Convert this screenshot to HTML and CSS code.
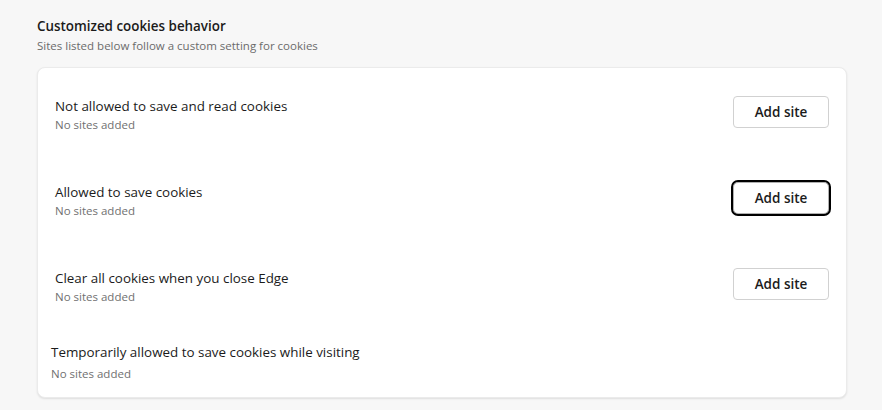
FILE: index.html
```html
<!DOCTYPE html>
<html lang="en">
<head>
<meta charset="utf-8">
<title>Customized cookies behavior</title>
<link rel="stylesheet" href="styles.css">
</head>
<body>
<main class="page">
  <header class="section-head">
    <h2 class="section-title">Customized cookies behavior</h2>
    <p class="section-desc">Sites listed below follow a custom setting for cookies</p>
  </header>
  <section class="card">
    <div class="row">
      <div class="row-text">
        <div class="row-title">Not allowed to save and read cookies</div>
        <div class="row-sub">No sites added</div>
      </div>
      <button class="btn" type="button">Add site</button>
    </div>
    <div class="row">
      <div class="row-text">
        <div class="row-title">Allowed to save cookies</div>
        <div class="row-sub">No sites added</div>
      </div>
      <button class="btn btn-focus" type="button">Add site</button>
    </div>
    <div class="row">
      <div class="row-text">
        <div class="row-title">Clear all cookies when you close Edge</div>
        <div class="row-sub">No sites added</div>
      </div>
      <button class="btn" type="button">Add site</button>
    </div>
    <div class="row row-last">
      <div class="row-text">
        <div class="row-title">Temporarily allowed to save cookies while visiting</div>
        <div class="row-sub row-sub-wide">No sites added</div>
      </div>
    </div>
  </section>
</main>
</body>
</html>
```

FILE: styles.css
```css
* { box-sizing: border-box; }
html, body { margin: 0; padding: 0; }
body {
  background: #f7f7f7;
  font-family: "Open Sans", "Noto Sans", "Liberation Sans", sans-serif;
  color: #1b1b1b;
  width: 882px;
  height: 410px;
  overflow: hidden;
}
.page {
  padding: 16px 35px 0 37px;
}
.section-head { margin: 0; }
.section-title {
  margin: 0;
  font-size: 13.4px;
  font-weight: 600;
  line-height: 20px;
  color: #1b1b1b;
}
.section-desc {
  margin: 2px 0 0;
  font-size: 11.5px;
  line-height: 16px;
  color: #6b6b6b;
}
.card {
  margin-top: 13px;
  width: 810px;
  background: #ffffff;
  border: 1px solid #ebebeb;
  border-radius: 8px;
  box-shadow: 0 1px 2px rgba(0,0,0,0.10);
  padding-bottom: 14px;
}
.row {
  display: flex;
  justify-content: space-between;
  align-items: flex-start;
  height: 86px;
  padding: 28px 17px 0 17px;
}
.row-last {
  height: auto;
  padding: 16px 17px 0 13px;
}
.row-title {
  font-size: 13.4px;
  line-height: 20px;
  color: #1b1b1b;
}
.row-sub {
  font-size: 11.5px;
  line-height: 18px;
  color: #707070;
}
.row-sub-wide { margin-top: 3px; }
.btn {
  width: 96px;
  height: 32px;
  background: #ffffff;
  border: 1px solid #d1d1d1;
  border-radius: 4px;
  font-family: inherit;
  font-size: 13.5px;
  font-weight: 600;
  color: #1b1b1b;
  padding: 0;
}
.btn-focus {
  border-color: #b0b0b0;
  outline: 2px solid #000000;
  outline-offset: 0;
  border-radius: 5px;
}
```
